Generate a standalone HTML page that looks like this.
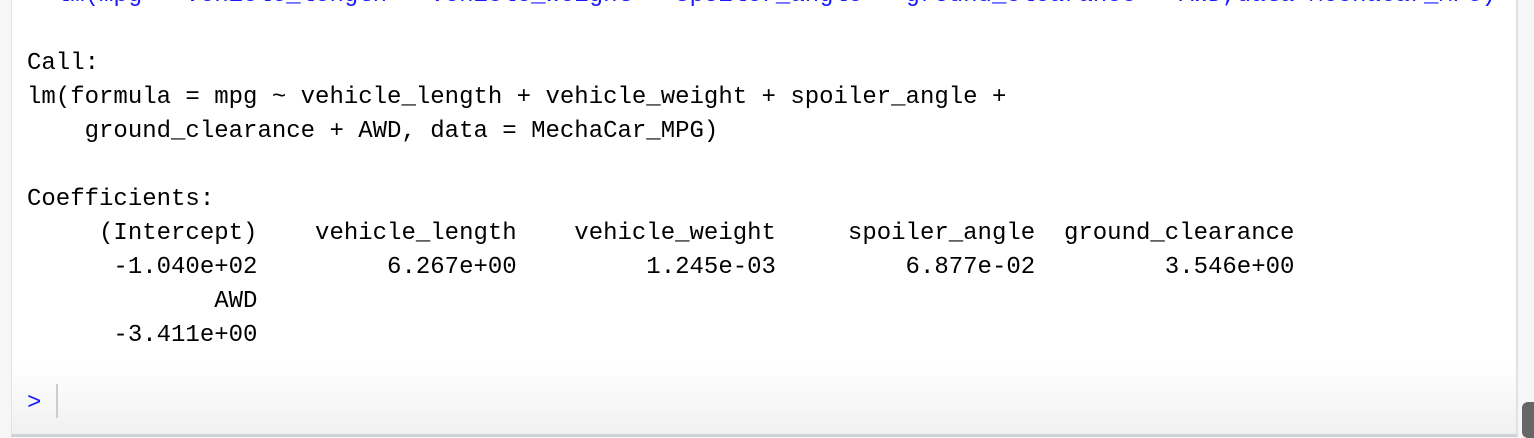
<!DOCTYPE html>
<html><head><style>
body{margin:0;width:1534px;height:438px;background:#f6f6f6;overflow:hidden;position:relative}
#c{position:absolute;left:11px;top:0;width:1504px;height:434px;background:#fff;border-right:2px solid #e2e2e2;border-left:1px solid #e2e2e2;border-bottom:3px solid #d0d3d6;overflow:hidden}
#sh{position:absolute;left:0;right:0;bottom:0;height:70px;background:linear-gradient(to bottom,rgba(0,0,0,0),rgba(0,0,0,0.06))}
pre{position:absolute;left:15px;top:-21px;margin:0;font-family:"Liberation Mono",monospace;font-size:24px;line-height:34px;color:#000;letter-spacing:0}
.b{color:#1a1aff}
#cur{position:absolute;left:44px;top:384px;width:2px;height:34px;background:#ccc}
#sb{position:absolute;left:1522px;top:402px;width:12px;height:36px;background:#666;border-radius:6px 0 0 6px}
</style></head><body>
<div id="c"><div id="sh"></div>
<pre><span class="b">&gt; lm(mpg ~ vehicle_length + vehicle_weight + spoiler_angle + ground_clearance + AWD,data=MechaCar_MPG)</span>

Call:
lm(formula = mpg ~ vehicle_length + vehicle_weight + spoiler_angle + 
    ground_clearance + AWD, data = MechaCar_MPG)

Coefficients:
     (Intercept)    vehicle_length    vehicle_weight     spoiler_angle  ground_clearance  
      -1.040e+02         6.267e+00         1.245e-03         6.877e-02         3.546e+00  
             AWD  
      -3.411e+00  

<span class="b">&gt;</span></pre>
<div id="cur"></div>
</div>
<div id="sb"></div>
</body></html>
